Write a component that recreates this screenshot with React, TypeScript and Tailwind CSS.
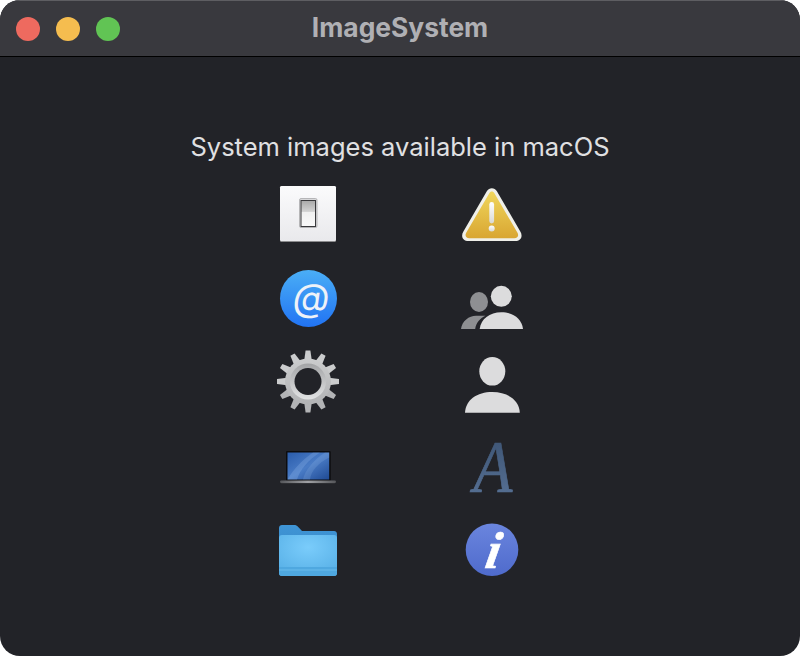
import React from "react";

const box = "w-16 h-16 block overflow-visible";

function Toggle() {
  return (
    <svg viewBox="0 0 64 64" className={box}>
      <defs>
        <linearGradient id="tg" x1="0" y1="0" x2="0" y2="1">
          <stop offset="0" stopColor="#fbfbfc" />
          <stop offset="1" stopColor="#e9e9ec" />
        </linearGradient>
        <linearGradient id="tk" x1="0" y1="0" x2="0" y2="1">
          <stop offset="0" stopColor="#a9a9a9" />
          <stop offset="0.42" stopColor="#d2d2d2" />
          <stop offset="0.45" stopColor="#f0f0f0" />
          <stop offset="1" stopColor="#fafafa" />
        </linearGradient>
      </defs>
      <rect x="4" y="4" width="56" height="56" rx="1.500" fill="#8b8b8d" />
      <rect x="4" y="4" width="56" height="55" rx="1.500" fill="url(#tg)" />
      <rect x="23.500" y="16.500" width="17.500" height="29" rx="1.500" fill="#d8d8da" stroke="#a9a9ab" strokeWidth="0.800" />
      <rect x="25" y="18.500" width="14.500" height="26" fill="url(#tk)" stroke="#3a3a3d" strokeWidth="1" />
    </svg>
  );
}

function AtIcon() {
  return (
    <svg viewBox="0 0 64 64" className={box}>
      <defs>
        <linearGradient id="at" x1="0" y1="0" x2="0" y2="1">
          <stop offset="0" stopColor="#4aaef6" />
          <stop offset="1" stopColor="#2173f3" />
        </linearGradient>
      </defs>
      <circle cx="32.500" cy="32.500" r="28.500" fill="url(#at)" />
      <g transform="translate(33.500 44.500) skewX(-8)">
        <text x="0" y="0" textAnchor="middle" fontSize="38" fontWeight="400" fill="#eef2f8" fontFamily="'Inter', sans-serif">@</text>
      </g>
    </svg>
  );
}

function Warning() {
  return (
    <svg viewBox="0 0 64 64" className={box}>
      <defs>
        <linearGradient id="wg" x1="0" y1="0" x2="0" y2="1">
          <stop offset="0" stopColor="#f0d65c" />
          <stop offset="1" stopColor="#d9a632" />
        </linearGradient>
        <linearGradient id="wb" x1="0" y1="0" x2="0" y2="1">
          <stop offset="0" stopColor="#ffffff" />
          <stop offset="1" stopColor="#d9d9d4" />
        </linearGradient>
      </defs>
      <path d="M26.800 9.200 3.400 49.600C.400 54.600 3 59 8.500 59h46.700c5.500 0 8.100-4.400 5.100-9.400L36.900 9.200c-2.300-4.100-7.800-4.100-10.100 0Z" fill="#efefe9" />
      <path d="M29.300 11.200 6.200 50.700C4.600 53.600 6 56.200 9.300 56.200h45.100c3.300 0 4.700-2.600 3.100-5.500L34.400 11.200c-1.200-2.200-3.900-2.200-5.100 0Z" fill="url(#wg)" />
      <rect x="29.300" y="20" width="4.800" height="21.500" rx="2.400" fill="url(#wb)" />
      <circle cx="31.700" cy="46.500" r="3" fill="url(#wb)" />
    </svg>
  );
}

function People() {
  return (
    <svg viewBox="0 0 64 64" className={box}>
      <ellipse cx="19" cy="36" rx="9" ry="10" fill="#8e8f92" />
      <path d="M1 63c1-8 8-13.300 15-13.300h9.500C20 52 16 57 15.200 63Z" fill="#8e8f92" />
      <circle cx="41.300" cy="30.300" r="10.500" fill="#dcdcdd" />
      <path d="M19.700 63c1-10 10-16.800 21.600-16.800S62 53 63 63Z" fill="#dcdcdd" />
    </svg>
  );
}

function Gear() {
  const teeth = Array.from({ length: 12 }, (_, i) => i * 30);
  return (
    <svg viewBox="0 0 64 64" className={box}>
      <defs>
        <linearGradient id="gg" x1="0" y1="0" x2="0" y2="1">
          <stop offset="0" stopColor="#cbcccd" />
          <stop offset="1" stopColor="#b2b3b5" />
        </linearGradient>
        <linearGradient id="gr" x1="0" y1="0" x2="0" y2="1">
          <stop offset="0" stopColor="#a3a4a6" />
          <stop offset="1" stopColor="#e2e3e4" />
        </linearGradient>
      </defs>
      <g>
        {teeth.map((a) => (
          <path
            key={a}
            d="M29.600 0.500h4.800l1.400 10h-7.600Z"
            fill={a > 90 && a < 270 ? "#b3b4b6" : "#cbcccd"}
            transform={`rotate(${a} 32 31.500)`}
          />
        ))}
      </g>
      <circle cx="32" cy="31.500" r="23" fill="url(#gg)" />
      <circle cx="32" cy="31.500" r="18" fill="url(#gr)" />
      <circle cx="32" cy="31.500" r="13.500" fill="#222328" />
    </svg>
  );
}

function Person() {
  return (
    <svg viewBox="0 0 64 64" className={box}>
      <ellipse cx="32.300" cy="21.300" rx="13" ry="14.300" fill="#dcdcdd" />
      <path d="M5 62.800C5.500 50 17 42 32.300 42S59.300 50 59.800 62.800Z" fill="#dcdcdd" />
    </svg>
  );
}

function Laptop() {
  return (
    <svg viewBox="0 0 64 64" className={box}>
      <defs>
        <linearGradient id="ls" x1="0" y1="0" x2="1" y2="1">
          <stop offset="0" stopColor="#2a5cab" />
          <stop offset="0.5" stopColor="#4a7cc6" />
          <stop offset="1" stopColor="#1f4a94" />
        </linearGradient>
        <linearGradient id="lb" x1="0" y1="0" x2="1" y2="0">
          <stop offset="0" stopColor="#55565a" />
          <stop offset="0.5" stopColor="#a0a1a5" />
          <stop offset="1" stopColor="#55565a" />
        </linearGradient>
      </defs>
      <rect x="10" y="17" width="44.700" height="30" rx="1" fill="#0c0c0e" />
      <rect x="11.500" y="18.500" width="41.700" height="27" fill="url(#ls)" />
      <path d="M11.500 45.500C17 36 26 26 37 18.500h7C32 26 24 36 21 45.500Z" fill="#9cc0ee" opacity="0.25" />
      <path d="M27 45.500c2-9 10-19 22-27h4.200v5C42 29 35 37 34 45.500Z" fill="#a9c8ee" opacity="0.18" />
      <rect x="4" y="46.500" width="56" height="2.500" rx="1.250" fill="url(#lb)" />
      <rect x="5" y="49" width="54" height="1" rx="0.500" fill="#2d2e32" />
    </svg>
  );
}

function FontA() {
  return (
    <svg viewBox="0 0 64 64" className={box}>
      <defs>
        <linearGradient id="fa" x1="0" y1="0" x2="0" y2="1">
          <stop offset="0" stopColor="#39506f" />
          <stop offset="1" stopColor="#5a7499" />
        </linearGradient>
      </defs>
      <g transform="translate(33 0) scale(0.86 1)">
        <text x="0" y="58" textAnchor="middle" fontSize="74" fontStyle="italic" fill="url(#fa)" stroke="url(#fa)" strokeWidth="0.700" fontFamily="'Liberation Serif', serif">A</text>
      </g>
    </svg>
  );
}

function Folder() {
  return (
    <svg viewBox="0 0 64 64" className={box}>
      <defs>
        <linearGradient id="fb" x1="0" y1="0" x2="0" y2="1">
          <stop offset="0" stopColor="#3f95d6" />
          <stop offset="1" stopColor="#3b8ccc" />
        </linearGradient>
        <radialGradient id="ff" cx="0.5" cy="0.3" r="0.7">
          <stop offset="0" stopColor="#7accfb" />
          <stop offset="1" stopColor="#5ab2e8" />
        </radialGradient>
      </defs>
      <path d="M3 30V10c0-1.700 1.300-3 3-3h12c1.500 0 2.500.4 3.500 1.300L26 13h32c1.700 0 3 1.300 3 3v14Z" fill="url(#fb)" />
      <rect x="3" y="17" width="58" height="41" rx="3" fill="url(#ff)" />
      <path d="M3 49h58v6c0 1.700-1.300 3-3 3H6c-1.700 0-3-1.300-3-3Z" fill="#4fa8e0" />
      <rect x="3" y="51.500" width="58" height="1" fill="#6abbeb" />
    </svg>
  );
}

function Info() {
  return (
    <svg viewBox="0 0 64 64" className={box}>
      <defs>
        <linearGradient id="ig" x1="0" y1="0" x2="0" y2="1">
          <stop offset="0" stopColor="#6a85de" />
          <stop offset="1" stopColor="#4f6bcc" />
        </linearGradient>
      </defs>
      <circle cx="32" cy="31.700" r="26.300" fill="url(#ig)" />
      <g transform="translate(31 50) skewX(-10)">
        <text x="0" y="0" textAnchor="middle" fontSize="52" fontWeight="700" fontStyle="italic" fill="#ffffff" stroke="#ffffff" strokeWidth="0.600" fontFamily="'Liberation Serif', serif">i</text>
      </g>
    </svg>
  );
}

export default function App() {
  return (
    <div className="w-[800px] h-[656px] bg-white">
      <div className="w-full h-full rounded-[20px] overflow-hidden flex flex-col bg-[#222328] font-['Inter',sans-serif]">
        <header className="h-[57px] shrink-0 flex items-center px-4 gap-4 relative bg-[#39393e] border-b border-black border-t border-t-[#5e5e62]">
          <span className="w-6 h-6 rounded-full bg-[#ee6a5f]" />
          <span className="w-6 h-6 rounded-full bg-[#f5bd4f]" />
          <span className="w-6 h-6 rounded-full bg-[#61c454]" />
          <h1 className="absolute inset-x-0 text-center text-[26.400px] leading-none font-bold text-[#b0b0b4] -translate-y-px">ImageSystem</h1>
        </header>
        <main className="flex flex-col items-center">
          <p className="mt-[74px] h-[32px] text-[25.500px] leading-[32px] text-[#e0e0e2]">System images available in macOS</p>
          <div className="mt-[19px] grid grid-cols-[64px_64px] auto-rows-[64px] gap-x-[120px] gap-y-[20px]">
            <Toggle />
            <Warning />
            <AtIcon />
            <People />
            <Gear />
            <Person />
            <Laptop />
            <FontA />
            <Folder />
            <Info />
          </div>
        </main>
      </div>
    </div>
  );
}
